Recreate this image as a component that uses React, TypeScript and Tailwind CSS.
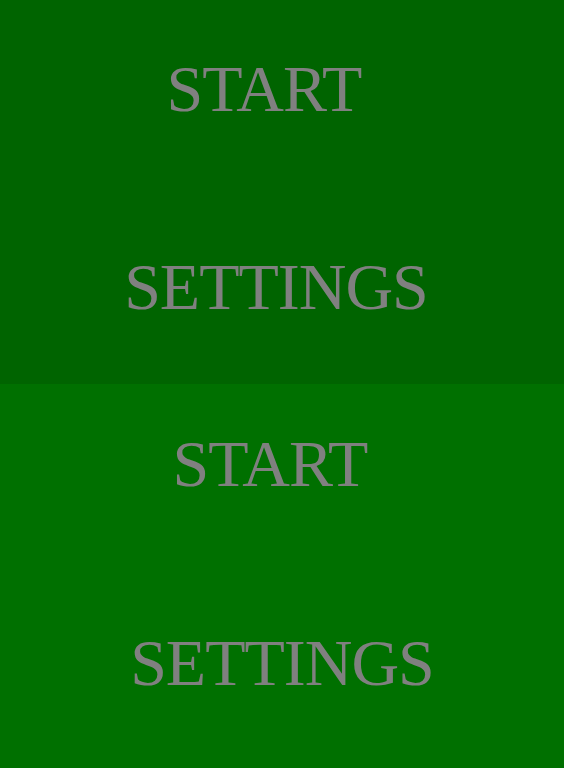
const font = { fontFamily: '"Liberation Serif", "Times New Roman", serif' };

function MenuPanel({ bg, top, gap, shift }: { bg: string; top: string; gap: string; shift: string }) {
  return (
    <div className={`h-[384px] flex flex-col items-center ${bg} ${top} ${shift}`}>
      <div className="text-[66px] leading-none tracking-[-1px] text-[#808080] pr-[24px]" style={font}>
        START
      </div>
      <div className={`text-[66px] leading-none tracking-[-1px] text-[#808080] ${gap}`} style={font}>
        SETTINGS
      </div>
    </div>
  );
}

export default function App() {
  return (
    <div className="w-[564px] h-[768px] overflow-hidden flex flex-col">
      <MenuPanel bg="bg-[#006400]" top="pt-[56px]" gap="mt-[132px]" shift="pr-[12px]" />
      <MenuPanel bg="bg-[#007000]" top="pt-[47px]" gap="mt-[133px]" shift="pr-0" />
    </div>
  );
}
